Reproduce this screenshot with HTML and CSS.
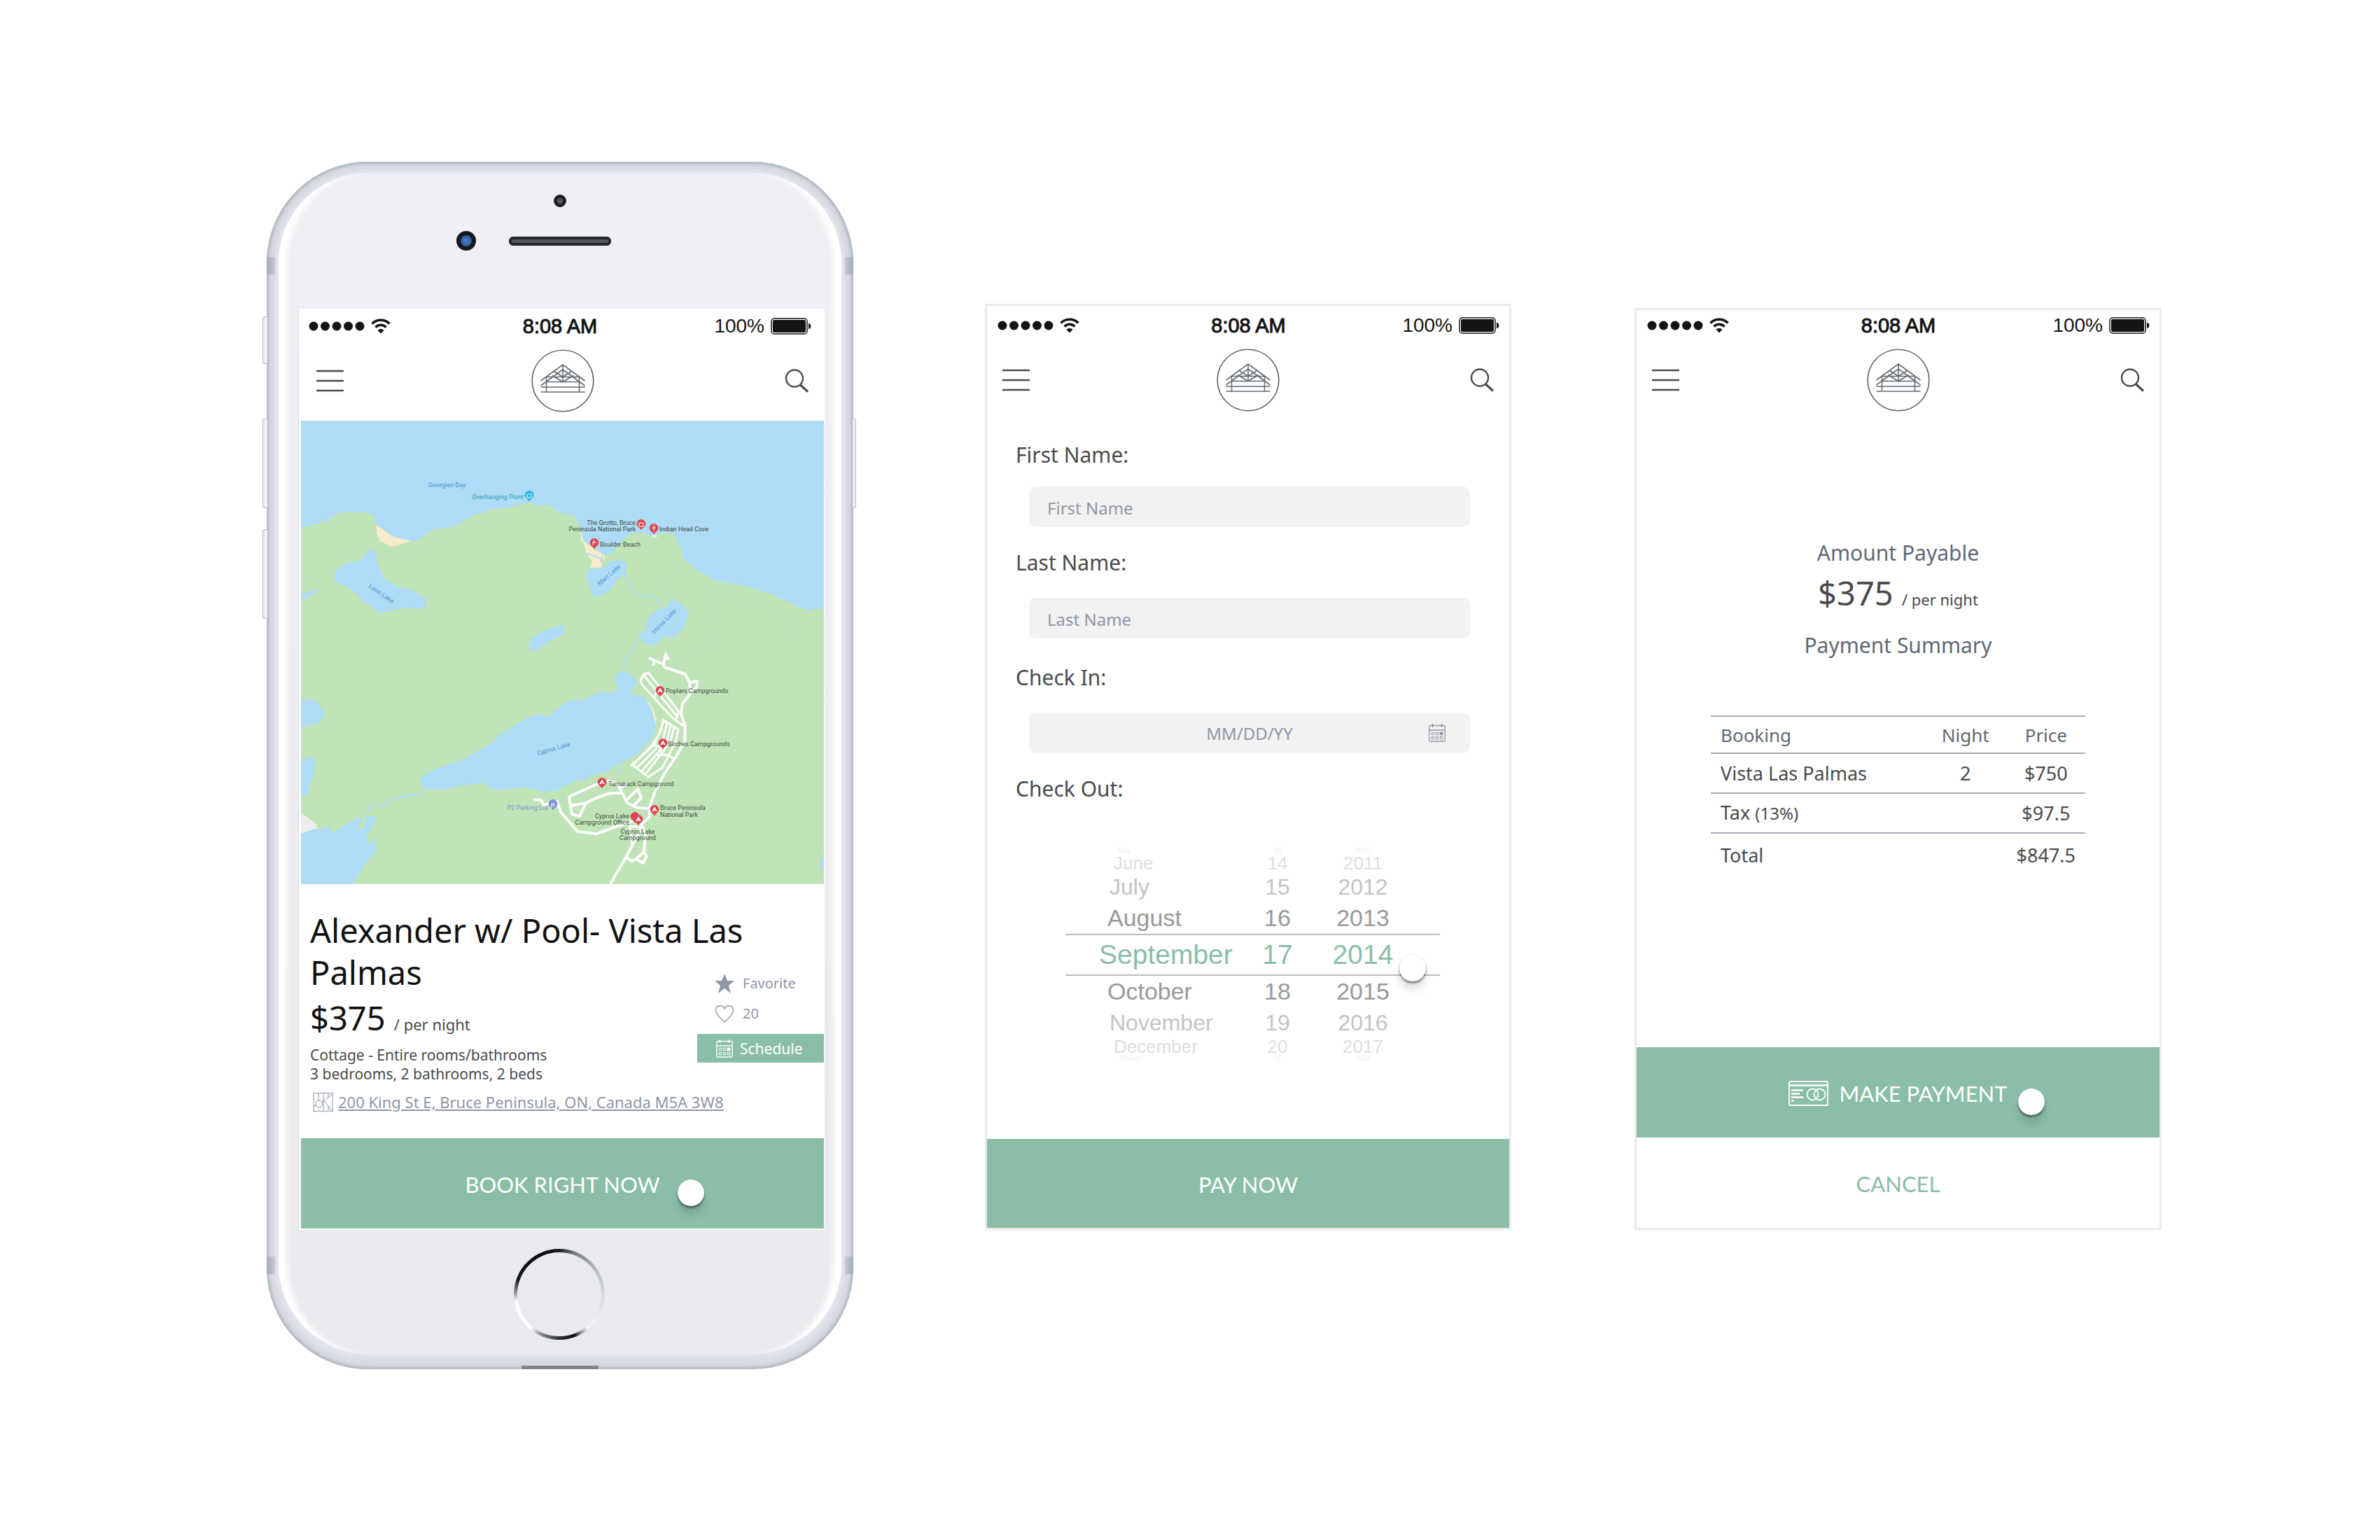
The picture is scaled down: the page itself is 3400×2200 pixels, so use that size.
FILE: index.html
```html
<!DOCTYPE html>
<html lang="en">
<head>
<meta charset="utf-8">
<title>Cottage booking flow</title>
<meta name="viewport" content="width=device-width, initial-scale=1">
<link rel="stylesheet" href="styles.css">
</head>
<body>
<svg class="sprite" aria-hidden="true">
  <symbol id="signal" viewBox="0 0 80 14"><circle cx="7" cy="7" r="6.5"/><circle cx="23.5" cy="7" r="6.5"/><circle cx="40" cy="7" r="6.5"/><circle cx="56.5" cy="7" r="6.5"/><circle cx="73" cy="7" r="6.5"/></symbol>
  <symbol id="wifi" viewBox="0 0 28 22"><g fill="none" stroke="currentColor" stroke-width="3.4"><path d="M1.5 7.5C8 .5 20 .5 26.500 7.500"/><path d="M6.500 12.500c4-4.300 11-4.300 15 0"/></g><path d="M14 21.500l-4.500-4.800c2.500-2.300 6.500-2.300 9 0z"/></symbol>
  <symbol id="battery" viewBox="0 0 58 24"><rect x="1" y="1" width="51" height="22" rx="4" fill="none" stroke="currentColor" stroke-width="1.500"/><rect x="3" y="3" width="47" height="18" rx="2"/><path d="M54 8c4.500 0 4.500 8 0 8z"/></symbol>
  <symbol id="menu" viewBox="0 0 39 32"><path d="M0 2h39M0 16h39M0 30h39" fill="none" stroke="currentColor" stroke-width="2.600"/></symbol>
  <symbol id="search" viewBox="0 0 34 34"><g fill="none" stroke="currentColor" stroke-width="2.400"><circle cx="14" cy="13.500" r="12"/><path d="M22 22.500L33 32.500" stroke-width="3.200"/></g></symbol>
  <symbol id="logo" viewBox="0 0 90 90"><g fill="none" stroke="currentColor" stroke-width="1.600"><circle cx="45" cy="45" r="43.800"/><path d="M13.500 45L45 22l31.500 23M13.500 52L45 29l31.500 23M21.500 39.500h47M21.500 46.500h47M13.500 54h63M13.500 61h63M21.500 39v22M68.500 39v22M45 22v24.500M32.500 31.500L45 39.500l12.500-8M30 37.500l15 9 15-9"/></g></symbol>
  <symbol id="calendar" viewBox="0 0 24 27"><g fill="none" stroke="currentColor" stroke-width="1.300"><rect x=".8" y="3.500" width="22.400" height="22.500" rx="1.500"/><path d="M1 10h22M5.500 1v5M18.500 1v5"/><path d="M4.200 13.200h3.500v3.500H4.200zM10.300 13.200h3.500v3.500h-3.500zM4.200 19.500h3.500v3.500H4.200zM10.300 19.500h3.500v3.500h-3.500zM16.400 19.500h3.500v3.500h-3.500z" stroke-width="1"/></g><path d="M15.800 12.600h4.700v4.700h-4.700z"/><circle cx="5.500" cy="3.500" r="1.600"/><circle cx="18.500" cy="3.500" r="1.600"/></symbol>
  <symbol id="pin" viewBox="-7 -16 14 17"><path d="M0 0C-1-4-6.400-5.500-6.400-9.700a6.400 6.200 0 0 1 12.800 0C6.400-5.500 1-4 0 0z"/></symbol>
  <symbol id="tent" viewBox="-7 -16 14 17"><path d="M0 0C-1-4-6.400-5.500-6.400-9.700a6.400 6.200 0 0 1 12.800 0C6.400-5.500 1-4 0 0z" fill="#dc4650"/><path d="M0-13.500l3.800 6.500h-2.600L0-9.500l-1.200 2.500h-2.600z" fill="#fff"/></symbol>
</svg>

<main class="stage">
  <section class="device-cell" aria-label="Listing">
    <div class="device">
      <span class="side side--mute"></span><span class="side side--up"></span><span class="side side--down"></span><span class="side side--power"></span>
      <span class="band band--tl"></span><span class="band band--tr"></span><span class="band band--bl"></span><span class="band band--br"></span>
      <div class="face">
        <div class="sensors">
          <span class="proximity"></span>
          <div class="ear-row"><span class="lens"></span><span class="speaker"></span></div>
        </div>
        <div class="display">
          <header>
            <div class="status">
              <div class="status-left"><svg class="i-signal"><use href="#signal"/></svg><svg class="i-wifi"><use href="#wifi"/></svg></div>
              <span class="clock">8:08 AM</span>
              <div class="status-right"><span>100%</span><svg class="i-battery"><use href="#battery"/></svg></div>
            </div>
            <nav class="nav">
              <button class="icon-btn" aria-label="Menu"><svg class="i-menu"><use href="#menu"/></svg></button>
              <a class="logo" href="#" aria-label="Home"><svg class="i-logo"><use href="#logo"/></svg></a>
              <button class="icon-btn nav-end" aria-label="Search"><svg class="i-search"><use href="#search"/></svg></button>
            </nav>
          </header>
          <svg class="map" viewBox="0 0 747 662" role="img" aria-label="Map of the Bruce Peninsula">
            <rect class="land" width="747" height="662"/>
            <g class="water">
              <path d="M0 0H747V267L727 271 712 267 675 249 648 240 628 235 594 229 574 219 547 199 543 182 532 161 516 159 503 165 486 160 469 162 457 174 442 191 434 192 417 182 403 171 399 152 390 135 371 132 353 120 341 121 326 117 292 125 272 127 245 136 216 152 191 155 179 162 169 170 157 172 132 166 108 149 102 133 86 131 64 130 54 132 39 142 0 154z"/>
              <path d="M102 183l6 6 1 17 7 10v8l21 13 22 5 18 12 1 15-28-2-37 8-22-16-20-18-23-12v-13l16-13 19-2 13-15z"/>
              <path d="M0 247l23-6v5L0 257z"/>
              <path d="M407 222l5-10 22-3 5-7 15-3 11 3-1 14-17 18-8 10-17 9-6-4z"/>
              <path d="M529 255l16 7 9 13-7 21-17 15-12-3-10 11-7 2-14-4-1-6-7-5 12-5 5-19 10-11 17-5z"/>
              <path d="M371 292l6 4-1 8-25 13-15 11-11-1 4-16 15-9z"/>
              <path d="M459 358l10 3 10 10-1 6-9 12 22 6 12 17 5 20-5 19-22 26-29 14-18 13-9-1-22 11h-10l-25 13-15 4-34-7-34 4-15-2-7-9-37 5-25 6-24-2-7-10 2-7 14-9 45-16 44-25 5-8 15-9 24-16 22-8 5 4 10-2 22-18 15-4 7 2 25-12 12-1 4 2 12-5-4-20z"/>
              <path d="M0 399l15-1 10 6 9 13-7 14-27 8zM0 483l20-1v17l-5 17-4 13-2 7-9-1zM747 616l-7 18 7 8z"/>
              <path d="M0 590l15-6 17-1 9-6 2 13 26-16 14-7 5 1-7 14 7 1 8-19 11 2v6L92 594l6 10 9-6 1 16-17 20-17 28H0z"/>
            </g>
            <path class="urban" d="M0 560l23 17v5l-23 8z"/>
            <g class="sand"><path d="M108 149l24 17 25 6-6 2-21 6-17-8-5-11zM399 154l4 17 14 11 17 10v5l-4 5-1 8h-16l3-9-9-12-2-13-5-5z"/><ellipse cx="505" cy="165" rx="4" ry="2"/><path d="M491 396l10 17 6 21 1-8-6-17z"/></g>
            <g class="stream"><path d="M177 528l-12 6-22 4-12 2-13 10-13-2-8 6-5 14M461 216l13 28 10 7 20-1 12 16M479 310l-5 20-10 8-5 20M407 189l20 7 4 8M431 192l-1 8M457 490l-3 14"/></g>
            <g class="trail"><path d="M0 235l20-3 20-10 14-22 20-12 18-20 14-12M112 184l30 6 30-4 20-16 40-18M236 152l30-8 40-10 20-10 20 4 30 6 20 18 10 20M407 230l4 30 2 30 14 20 20 10 6 30-5 30M453 320l10 0 20-10M516 170l20 20-4 30-24 24-4 30-14 14-8 10M594 234l-4 40-6 50-30 10-40 14-20 24-14 18M600 234l20 24 40 10 44 14-4 30M383 520l30-14 20-4"/></g>
            <g class="roads">
              <path class="road-main" d="M442 662l22-38 17-32 5-15 12-11V552l8-23 12-23 17-25 13-22 1-22-6-18 2-15 12-15-2-15-6-12-30-10-1-4-21-9M518 348l3-15 4 9M503 350l2-7M555 374l11-2-1 10-8 5"/>
              <path d="M496 360l-7 3-4 8 2 6 44 48 4 3 5-12-42-54zM490 364l47 58M508 384l-3 12M535 428l13 9"/>
              <path d="M517 427l22 14-4 18-19 37-20 13-22-17 29-30 12-20zM523 432l-7 28-36 36M528 435l-6 26-36 40M533 438l-6 22-36 46M519 428l-14 35-34 30M503 462l12 6 6-2M508 478l15-1 10 6"/>
              <path class="road-main" d="M430 516l-47 21 4 25 11 3 9-19 17-8 18-6h15M437 514l15 5 14 27 15 7 17 1M386 550l21-4M466 541l15-15 5 13-12 12M457 524l10-6"/>
              <path class="road-main" d="M332 541l11 1 4 7 19-5 5 15 24 28 27 3 25-9 27-9M486 577l6 12-2 27 4 6-6 10-9-6-6 3-9-5M490 616l-11 10M469 579l5 27M470 580l12 0"/>
            </g>
            <g class="pins">
              <use href="#pin" class="pin-cyan" x="319" y="100" width="14" height="17"/>
              <use href="#pin" x="479" y="141" width="14" height="17"/>
              <use href="#pin" x="497" y="147" width="14" height="17"/>
              <use href="#pin" x="412" y="168" width="14" height="17"/>
              <use href="#tent" x="506" y="379" width="14" height="17"/>
              <use href="#tent" x="510" y="454" width="14" height="17"/>
              <use href="#tent" x="423" y="510" width="14" height="17"/>
              <use href="#tent" x="498" y="549" width="14" height="17"/>
              <use href="#pin" x="470" y="559" width="14" height="17"/>
              <use href="#tent" x="475" y="563" width="14" height="17"/>
              <use href="#pin" class="pin-violet" x="353" y="541" width="14" height="17"/>
              <path class="glyph" d="M323 105h6v5h-6zM483 146h6v5h-6zM504 149v9M501 153h6M419 170l-2 8M416 174h6M358 546v7M358 547h4v3h-4"/>
            </g>
            <g class="labels">
              <text x="478" y="149" text-anchor="end">The Grotto, Bruce</text>
              <text x="478" y="158" text-anchor="end">Peninsula National Park</text>
              <text x="512" y="158">Indian Head Cove</text>
              <text x="427" y="180">Boulder Beach</text>
              <text x="521" y="389">Poplars Campgrounds</text>
              <text x="524" y="465">Birches Campgrounds</text>
              <text x="439" y="522">Tamarack Campground</text>
              <text x="513" y="556">Bruce Peninsula</text>
              <text x="513" y="566">National Park</text>
              <text x="469" y="568" text-anchor="end">Cyprus Lake</text>
              <text x="469" y="577" text-anchor="end">Campground Office</text>
              <text x="481" y="590" text-anchor="middle">Cyprus Lake</text>
              <text x="481" y="599" text-anchor="middle">Campground</text>
              <text class="parking" x="353" y="556" text-anchor="end">P2 Parking Lot</text>
              <text class="poi" x="318" y="112" text-anchor="end">Overhanging Point</text>
              <text class="lake" x="182" y="95">Georgian Bay</text>
              <text class="lake" transform="translate(96 238) rotate(34)">Loon Lake</text>
              <text class="lake" transform="translate(427 236) rotate(-42)">Marr Lake</text>
              <text class="lake" transform="translate(505 305) rotate(-46)">Horse Lake</text>
              <text class="lake" transform="translate(338 478) rotate(-16)">Cyprus Lake</text>
            </g>
          </svg>
          <article class="listing">
            <h1 class="listing-title">Alexander w/ Pool- Vista Las Palmas</h1>
            <div class="listing-facts">
              <p class="price">$375 <small>/ per night</small></p>
              <p class="facts">Cottage - Entire rooms/bathrooms<br>3 bedrooms, 2 bathrooms, 2 beds</p>
              <p class="address">
                <svg class="i-map" viewBox="0 0 29 29" aria-hidden="true"><g fill="none" stroke="currentColor" stroke-width="1"><path d="M1 1l7 1 7-1 7 1 6-1v27l-6-1-7 1-7-1-7 1zM8 2v11M15 1v27M22 2v7M22 20v7M1 20l4-1M12 15L28 3M15 12l13 15"/><circle cx="9" cy="17" r="5"/></g></svg>
                <a href="#">200 King St E, Bruce Peninsula, ON, Canada M5A 3W8</a>
              </p>
            </div>
            <div class="actions">
              <button class="action"><svg class="i-star" viewBox="0 0 28 28" aria-hidden="true"><path fill="currentColor" d="M14 0l4 10h10l-8 7 3 11-9-7-9 7 3-11-8-7h10z"/></svg>Favorite</button>
              <button class="action" aria-label="20 likes"><svg class="i-star" viewBox="0 0 28 28" aria-hidden="true"><path fill="none" stroke="currentColor" stroke-width="1.400" d="M14 26C9 21 1.500 15.500 1.500 9.500 1.500 1.500 11 .5 14 7c3-6.500 12.500-5.500 12.500 2.500C26.500 15.500 19 21 14 26z"/></svg>20</button>
              <button class="schedule"><svg class="i-calendar"><use href="#calendar"/></svg>Schedule</button>
            </div>
          </article>
          <button class="cta">BOOK RIGHT NOW<span class="touch touch--book"></span></button>
        </div>
        <button class="home" aria-label="Home button"></button>
      </div>
      <span class="port"></span>
    </div>
  </section>

  <section class="panel panel--form" aria-label="Guest details">
    <header>
      <div class="status">
        <div class="status-left"><svg class="i-signal"><use href="#signal"/></svg><svg class="i-wifi"><use href="#wifi"/></svg></div>
        <span class="clock">8:08 AM</span>
        <div class="status-right"><span>100%</span><svg class="i-battery"><use href="#battery"/></svg></div>
      </div>
      <nav class="nav">
        <button class="icon-btn" aria-label="Menu"><svg class="i-menu"><use href="#menu"/></svg></button>
        <a class="logo" href="#" aria-label="Home"><svg class="i-logo"><use href="#logo"/></svg></a>
        <button class="icon-btn nav-end" aria-label="Search"><svg class="i-search"><use href="#search"/></svg></button>
      </nav>
    </header>
    <form>
      <div class="field field--first">
        <label for="first">First Name:</label>
        <div class="control"><input id="first" type="text" placeholder="First Name"></div>
      </div>
      <div class="field">
        <label for="last">Last Name:</label>
        <div class="control"><input id="last" type="text" placeholder="Last Name"></div>
      </div>
      <div class="field field--date">
        <label for="checkin">Check In:</label>
        <div class="control"><input id="checkin" type="text" placeholder="MM/DD/YY"><svg class="i-calendar control-icon"><use href="#calendar"/></svg></div>
      </div>
      <div class="field">
        <span class="field-label" id="checkout">Check Out:</span>
      </div>
      <div class="picker" role="group" aria-labelledby="checkout">
        <div class="pick pick--edge"><span>May</span><span>13</span><span>2010</span></div>
        <div class="pick pick--far"><span>June</span><span>14</span><span>2011</span></div>
        <div class="pick pick--mid"><span>July</span><span>15</span><span>2012</span></div>
        <div class="pick pick--near"><span>August</span><span>16</span><span>2013</span></div>
        <div class="pick pick--on"><span>September</span><span>17</span><span>2014</span></div>
        <div class="pick pick--near"><span>October</span><span>18</span><span>2015</span></div>
        <div class="pick pick--mid"><span>November</span><span>19</span><span>2016</span></div>
        <div class="pick pick--far"><span>December</span><span>20</span><span>2017</span></div>
        <div class="pick pick--edge"><span>January</span><span>21</span><span>2018</span></div>
        <span class="touch touch--picker"></span>
      </div>
      <button class="cta cta--short" type="button">PAY NOW</button>
    </form>
  </section>

  <section class="panel panel--pay" aria-label="Payment">
    <header>
      <div class="status">
        <div class="status-left"><svg class="i-signal"><use href="#signal"/></svg><svg class="i-wifi"><use href="#wifi"/></svg></div>
        <span class="clock">8:08 AM</span>
        <div class="status-right"><span>100%</span><svg class="i-battery"><use href="#battery"/></svg></div>
      </div>
      <nav class="nav">
        <button class="icon-btn" aria-label="Menu"><svg class="i-menu"><use href="#menu"/></svg></button>
        <a class="logo" href="#" aria-label="Home"><svg class="i-logo"><use href="#logo"/></svg></a>
        <button class="icon-btn nav-end" aria-label="Search"><svg class="i-search"><use href="#search"/></svg></button>
      </nav>
    </header>
    <div class="summary">
      <h2>Amount Payable</h2>
      <p class="price">$375 <small>/ per night</small></p>
      <h2 class="summary-sub">Payment Summary</h2>
      <table class="bill">
        <thead><tr><th scope="col">Booking</th><th scope="col">Night</th><th scope="col">Price</th></tr></thead>
        <tbody>
          <tr><td>Vista Las Palmas</td><td>2</td><td>$750</td></tr>
          <tr><td>Tax <small>(13%)</small></td><td></td><td>$97.5</td></tr>
          <tr class="total"><td>Total</td><td></td><td>$847.5</td></tr>
        </tbody>
      </table>
    </div>
    <button class="cta"><svg class="i-card" viewBox="0 0 57 36" aria-hidden="true"><g fill="none" stroke="currentColor" stroke-width="1.800"><rect x="1" y="1" width="55" height="34" rx="2"/><path d="M1 6.500h55" stroke-width="2.600"/><path d="M4 13.500h17M4 18.500h12M4 23.500h17M4 28.500h3.500" stroke-width="2.400"/><circle cx="34.500" cy="19.500" r="8"/><circle cx="44.500" cy="19.500" r="8"/></g></svg>MAKE PAYMENT<span class="touch touch--pay"></span></button>
    <button class="cta cta--plain">CANCEL</button>
  </section>
</main>
</body>
</html>
```
FILE: styles.css
```css
:root {
  --green: #8abea7;
  --ink: #4a4a4a;
  --slate: #5e6972;
  --muted: #8f96a6;
  --rule: #a6abb3;
}

* { box-sizing: border-box; }

body {
  margin: 0;
  background: #fff;
  color: var(--ink);
  font-family: "Noto Sans", "Open Sans", sans-serif;
}

h1, h2, p { margin: 0; font-weight: 400; }

button {
  border: 0;
  padding: 0;
  background: none;
  color: inherit;
  font: inherit;
}

svg { display: block; fill: currentColor; }
.sprite { position: absolute; width: 0; height: 0; }

.stage {
  display: grid;
  grid-template-columns: 862fr 752fr 753fr;
  align-items: start;
  gap: 176px;
  padding: 231px 312px 240px 369px;
}

/* Phone hardware */
.device-cell { padding: 0 12px; }

.device {
  position: relative;
  padding: 16px 17px 22px;
  border-radius: 144px;
  background: #dfe2ea;
  box-shadow: inset 0 0 3px 3px #b3b9c2, inset 0 0 14px 8px #cdd1da;
}

.face {
  padding: 31px 24px 20px 28px;
  border-radius: 128px;
  background: linear-gradient(#eff0f5, #e8eaee);
  box-shadow: inset 18px 0 8px -6px #fff, inset -18px 0 8px -6px #fff, 0 0 6px 2px #e6e8ef;
}

.sensors {
  display: flex;
  flex-direction: column;
  align-items: center;
  gap: 34px;
  padding: 0 4px 83px 0;
}

.proximity {
  width: 18px;
  height: 18px;
  border: 5px solid #1d1f22;
  border-radius: 50%;
  background: #55585c;
}

.ear-row {
  display: grid;
  grid-template-columns: 1fr auto 1fr;
  align-items: center;
  gap: 47px;
  width: 100%;
}

.lens {
  justify-self: end;
  width: 28px;
  height: 28px;
  border: 6px solid #16181d;
  border-radius: 50%;
  background: radial-gradient(#4d83cc, #24437f);
}

.speaker {
  width: 146px;
  height: 13px;
  border: 4px solid #25272b;
  border-radius: 6px;
  background: #55595e;
}

.home {
  display: block;
  width: 130px;
  height: 130px;
  margin: 27px calc(50% - 62px) 0 auto;
  border: 5px solid transparent;
  border-radius: 50%;
  background:
    linear-gradient(#e8eaee, #e8eaee) padding-box,
    conic-gradient(#1b1e22, #747b83 20deg, #b5bac2 55deg, #d8dbe0 90deg, #f4f5f7 140deg, #9a9ea4 150deg, #0e1013 160deg, #2b2e33 180deg, #8b9097 205deg, #fff 220deg, #fff 260deg, #7c8188 275deg, #14171b 290deg, #08090b 335deg, #1b1e22) border-box;
}

.side {
  position: absolute;
  left: -6px;
  width: 7px;
  border: 1px solid #b4b9c0;
  border-right: 0;
  border-radius: 4px 0 0 4px;
  background: #eceef1;
}

.side--mute { top: 221px; height: 68px; }
.side--up { top: 367px; height: 128px; }
.side--down { top: 525px; height: 128px; }

.side--power {
  top: 367px;
  right: -4px;
  left: auto;
  width: 5px;
  height: 128px;
  border: 1px solid #b4b9c0;
  border-left: 0;
  border-radius: 0 4px 4px 0;
}

.band { position: absolute; width: 12px; height: 25px; background: linear-gradient(to right, #a2a9b2, #c6cad3); }
.band--tl { top: 136px; left: 0; }
.band--tr { top: 136px; right: 0; }
.band--bl { bottom: 136px; left: 0; }
.band--br { right: 0; bottom: 136px; }
.band--tr, .band--br { background: linear-gradient(to left, #a2a9b2, #c6cad3); }

.port {
  position: absolute;
  bottom: 0;
  left: 50%;
  width: 110px;
  height: 5px;
  margin-left: -55px;
  background: #7f8389;
}

.display {
  padding: 0 1px 2px 3px;
  border-left: 1px solid #d9dce4;
  background: #fff;
}

/* Screen header */
.status {
  display: grid;
  grid-template-columns: 1fr auto 1fr;
  align-items: center;
  padding: 10px 18px 10px 11px;
  color: #141414;
  font: 28px/30px "Liberation Sans", Arial, sans-serif;
}

.status-left, .status-right { display: flex; align-items: center; gap: 9px; }
.status-right { justify-content: flex-end; }
.clock { font-size: 29px; -webkit-text-stroke: 1px currentColor; }

.panel .status { padding-right: 14px; padding-left: 15px; }
.panel--form .status { padding-top: 13px; }
.panel--pay .status { padding-top: 7px; }

.nav {
  display: grid;
  grid-template-columns: 1fr auto 1fr;
  align-items: center;
  padding: 8px 22px 12px;
}

.nav-end { justify-self: end; }
.logo { color: #646b72; }

.i-signal { width: 80px; height: 14px; }
.i-wifi { width: 28px; height: 22px; }
.i-battery { width: 58px; height: 24px; }
.i-menu { width: 39px; height: 32px; }
.i-logo { width: 90px; height: 90px; }
.i-search { width: 34px; height: 34px; }
.i-calendar { width: 24px; height: 27px; }
.i-star { width: 28px; height: 28px; }
.i-map { width: 29px; height: 29px; }
.i-card { width: 57px; height: 36px; }

/* Map */
.map { width: 100%; height: auto; }
.land { fill: #c0e4b7; }
.water { fill: #aedbf5; }
.urban { fill: #ededee; }
.sand { fill: #f8ebca; }
.stream { fill: none; stroke: #aedbf5; stroke-width: 2; }
.trail { fill: none; stroke: #a3d3b5; stroke-width: 1; stroke-dasharray: 1 3; }
.roads { fill: none; stroke: #fbfcfb; stroke-width: 3; stroke-linejoin: round; }
.road-main { stroke-width: 4; }
.pins { fill: #dc4650; }
.pin-cyan { fill: #27b5dc; }
.pin-violet { fill: #7f8fd8; }
.glyph { fill: none; stroke: #fff; stroke-width: 1; }
.labels { fill: #3f4a42; font: 9px Roboto, sans-serif; }
.lake { fill: #4f94d4; }
.poi { fill: #2f9fb8; }
.parking { fill: #7f8fd8; }

/* Listing */
.listing {
  display: grid;
  grid-template-columns: 1fr 181px;
  grid-template-rows: 60px auto auto;
  padding: 36px 0 37px 13px;
}

.listing-title {
  grid-area: 1 / 1 / 3 / 3;
  color: #111;
  font-size: 47px;
  line-height: 60px;
}

.listing-facts { grid-area: 3 / 1 / 4 / 3; padding-top: 5px; }

.price { font-size: 47px; line-height: 60px; }
.listing .price { color: #111; }
.price small { color: var(--ink); font-size: 22px; line-height: 22px; }

.facts { margin-top: 10px; font-size: 21px; line-height: 27px; }

.address {
  display: flex;
  align-items: center;
  gap: 7px;
  margin: 11px 0 0 4px;
  color: var(--muted);
  font-size: 22px;
  line-height: 30px;
}

.address a { color: inherit; }

.actions {
  grid-area: 2 / 2 / 4 / 3;
  display: flex;
  flex-direction: column;
  gap: 15px;
  padding-top: 32px;
  z-index: 1;
}

.action, .schedule { display: flex; align-items: center; padding-left: 25px; }
.action { gap: 12px; color: var(--muted); font-size: 20px; line-height: 28px; }
.schedule { gap: 10px; height: 41px; padding-left: 27px; background: var(--green); color: #fff; font-size: 21px; }

/* Primary buttons */
.cta {
  position: relative;
  display: flex;
  align-items: center;
  justify-content: center;
  gap: 15px;
  width: 100%;
  height: 129px;
  padding-top: 3px;
  background: var(--green);
  color: #fff;
  font: 31px Lato, sans-serif;
}

.cta--short { height: 127px; }
.cta--plain { background: none; color: var(--green); }

.touch {
  position: absolute;
  width: 38px;
  height: 38px;
  border-radius: 50%;
  background: #fff;
  box-shadow: 0 0 2px rgba(0, 0, 0, .16), 0 3px 3px rgba(0, 0, 0, .4), 0 12px 12px rgba(0, 0, 0, .12);
}

.touch--book { top: 59px; left: 72%; }
.touch--picker { top: 153px; left: 477px; }
.touch--pay { top: 59px; left: 73%; }

/* Framed screens */
.panel { border: 3px solid #ebebeb; background: #fff; }
.panel--form { margin-top: 203px; }
.panel--pay { margin-top: 209px; }

/* Guest form */
.field { margin-top: 31px; padding: 0 56px 0 41px; }
.field label, .field-label { display: block; font-size: 30px; line-height: 40px; }
.control { position: relative; margin: 30px 0 0 19px; }
.field--first { margin-top: 30px; }
.field--first .control { margin-top: 25px; }
.field--date { margin-top: 36px; }

.control input {
  display: block;
  width: 100%;
  height: 58px;
  padding: 3px 26px 0;
  border: 0;
  border-radius: 10px;
  background: #f2f2f2;
  color: var(--ink);
  font: 24px "Noto Sans", sans-serif;
}

.control input::placeholder { color: var(--muted); opacity: 1; }
.field--date input { padding-top: 0; text-align: center; }
.control-icon { position: absolute; top: 15px; right: 35px; color: var(--muted); }

.picker {
  position: relative;
  margin: 64px 99px 110px 112px;
  font-family: "Liberation Sans", Arial, sans-serif;
}

.pick {
  display: grid;
  grid-template-columns: 252fr 102fr 142fr 39fr;
  text-align: center;
}

.pick span:first-child { text-align: left; }

.pick--on { border: 2px solid #b9bdc0; border-width: 2px 0; color: var(--green); font-size: 39px; line-height: 56px; }
.pick--on span:first-child { padding-left: 48px; }
.pick--near { color: #999; font-size: 34px; line-height: 45px; }
.pick--near span:first-child { padding-left: 60px; }
.pick--mid { color: #c4c4c4; font-size: 32px; line-height: 44px; }
.pick--mid span:first-child { padding-left: 63px; }
.pick--far { color: #dedede; font-size: 26px; line-height: 24px; }
.pick--far span:first-child { padding-left: 69px; }
.pick--edge { color: #f1f1f1; font-size: 10px; line-height: 10px; }
.pick--edge span:first-child { padding-left: 75px; }

/* Payment summary */
.summary { padding: 170px 106px 244px; text-align: center; }
.summary h2 { color: var(--slate); font-size: 30px; line-height: 40px; }
.summary .price { margin-top: 7px; }
.summary .summary-sub { margin-top: 25px; }

.bill {
  width: 100%;
  margin-top: 80px;
  border-collapse: collapse;
  table-layout: fixed;
  font-size: 27px;
  line-height: 36px;
}

.bill th, .bill td { height: 57px; padding: 0; border-top: 2px solid var(--rule); font-weight: 400; }
.bill th { height: 53px; color: var(--slate); width: 22%; font-size: 26px; }
.bill .total td { height: 62px; }
.bill th:first-child { width: 57%; }
.bill th:first-child, .bill td:first-child { padding-left: 14px; text-align: left; }
.bill th:last-child { width: 21%; }
.bill small { font-size: 24px; }
```
